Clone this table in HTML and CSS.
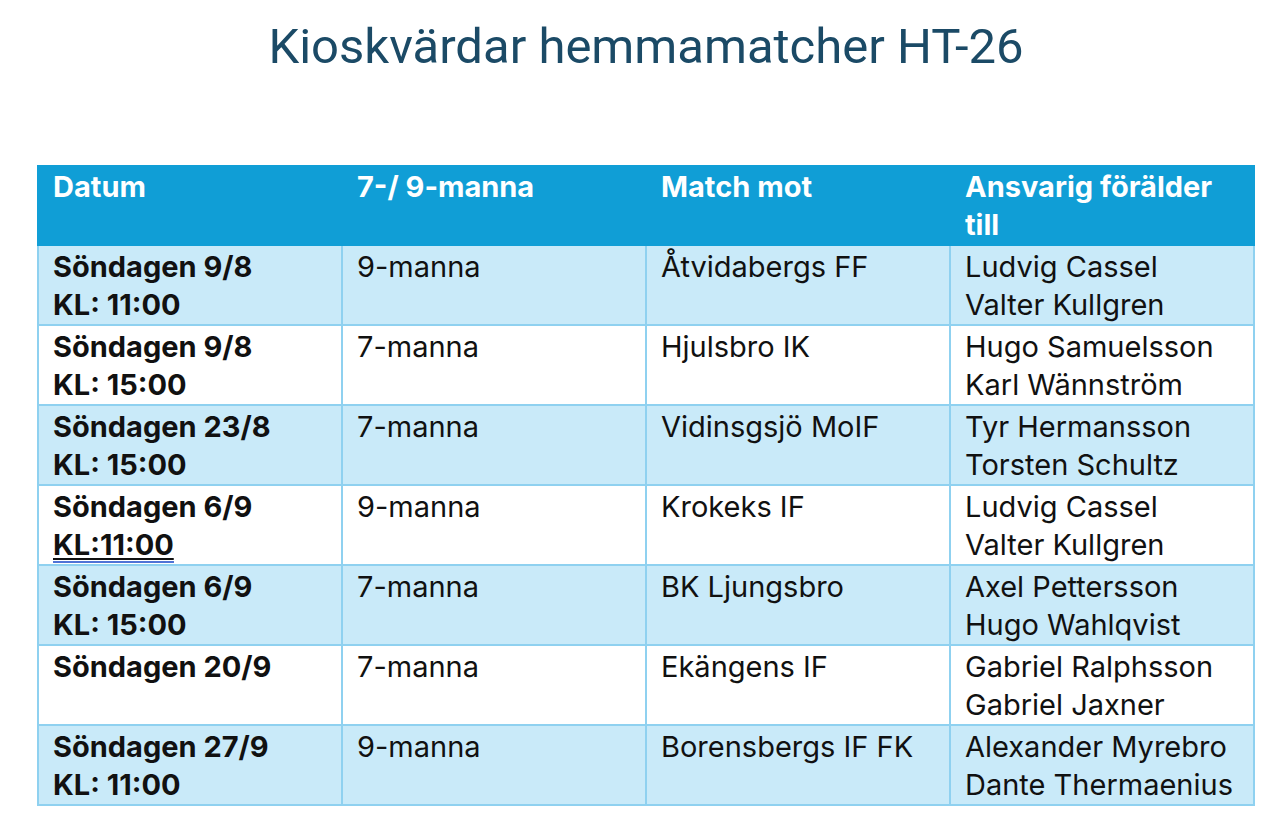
FILE: index.html
```html
<!DOCTYPE html>
<html lang="sv">
<head>
<meta charset="utf-8">
<link rel="stylesheet" href="styles.css">
</head>
<body>
<h1 class="title">Kioskvärdar hemmamatcher HT-26</h1>
<table class="schedule">
  <colgroup><col class="c"><col class="c"><col class="c"><col class="c"></colgroup>
  <thead>
    <tr><th>Datum</th><th>7-/ 9-manna</th><th>Match mot</th><th>Ansvarig förälder till</th></tr>
  </thead>
  <tbody>
    <tr class="alt"><td class="date">Söndagen 9/8<br>KL: 11:00</td><td>9-manna</td><td>Åtvidabergs FF</td><td>Ludvig Cassel<br>Valter Kullgren</td></tr>
    <tr><td class="date">Söndagen 9/8<br>KL: 15:00</td><td>7-manna</td><td>Hjulsbro IK</td><td>Hugo Samuelsson<br>Karl Wännström</td></tr>
    <tr class="alt"><td class="date">Söndagen 23/8<br>KL: 15:00</td><td>7-manna</td><td>Vidinsgsjö MoIF</td><td>Tyr Hermansson<br>Torsten Schultz</td></tr>
    <tr><td class="date">Söndagen 6/9<br><span class="spell">KL:11:00</span></td><td>9-manna</td><td>Krokeks IF</td><td>Ludvig Cassel<br>Valter Kullgren</td></tr>
    <tr class="alt"><td class="date">Söndagen 6/9<br>KL: 15:00</td><td>7-manna</td><td>BK Ljungsbro</td><td>Axel Pettersson<br>Hugo Wahlqvist</td></tr>
    <tr><td class="date">Söndagen 20/9</td><td>7-manna</td><td>Ekängens IF</td><td>Gabriel Ralphsson<br>Gabriel Jaxner</td></tr>
    <tr class="alt"><td class="date">Söndagen 27/9<br>KL: 11:00</td><td>9-manna</td><td>Borensbergs IF FK</td><td>Alexander Myrebro<br>Dante Thermaenius</td></tr>
  </tbody>
</table>
</body>
</html>
```
FILE: styles.css
```css
html, body {
  margin: 0;
  padding: 0;
  background: #ffffff;
}
body {
  font-family: Inter, "Noto Sans", "Liberation Sans", sans-serif;
  color: #111111;
  width: 1280px;
  height: 830px;
  overflow: hidden;
}
.title {
  margin: 0;
  padding: 18px 0 0 12px;
  height: 147px;
  box-sizing: border-box;
  text-align: center;
  font-family: Roboto, Inter, sans-serif;
  font-weight: 400;
  font-size: 49px;
  line-height: 58px;
  color: #1b4a66;
}
.schedule {
  margin: 18px 0 0 37px;
  width: 1216px;
  border-collapse: collapse;
  table-layout: fixed;
  font-size: 29px;
  line-height: 38px;
}
.schedule col.c {
  width: 304px;
}
.schedule th {
  background: #109ed6;
  color: #ffffff;
  font-weight: 700;
  text-align: left;
  vertical-align: top;
  height: 78px;
  box-sizing: border-box;
  padding: 1px 14px 0 14px;
  border: 2px solid #109ed6;
}
.schedule td {
  height: 78px;
  box-sizing: border-box;
  padding: 2px 14px 0 14px;
  vertical-align: top;
  border: 2px solid #8fd1f0;
  background: #ffffff;
}
.schedule tr.alt td {
  background: #c9eaf9;
}
.schedule td.date {
  font-weight: 700;
}
.spell {
  text-decoration: underline;
  text-decoration-thickness: 2px;
  text-underline-offset: 3px;
  border-bottom: 2px solid #4f73d6;
  line-height: 32px;
  display: inline-block;
}
```
